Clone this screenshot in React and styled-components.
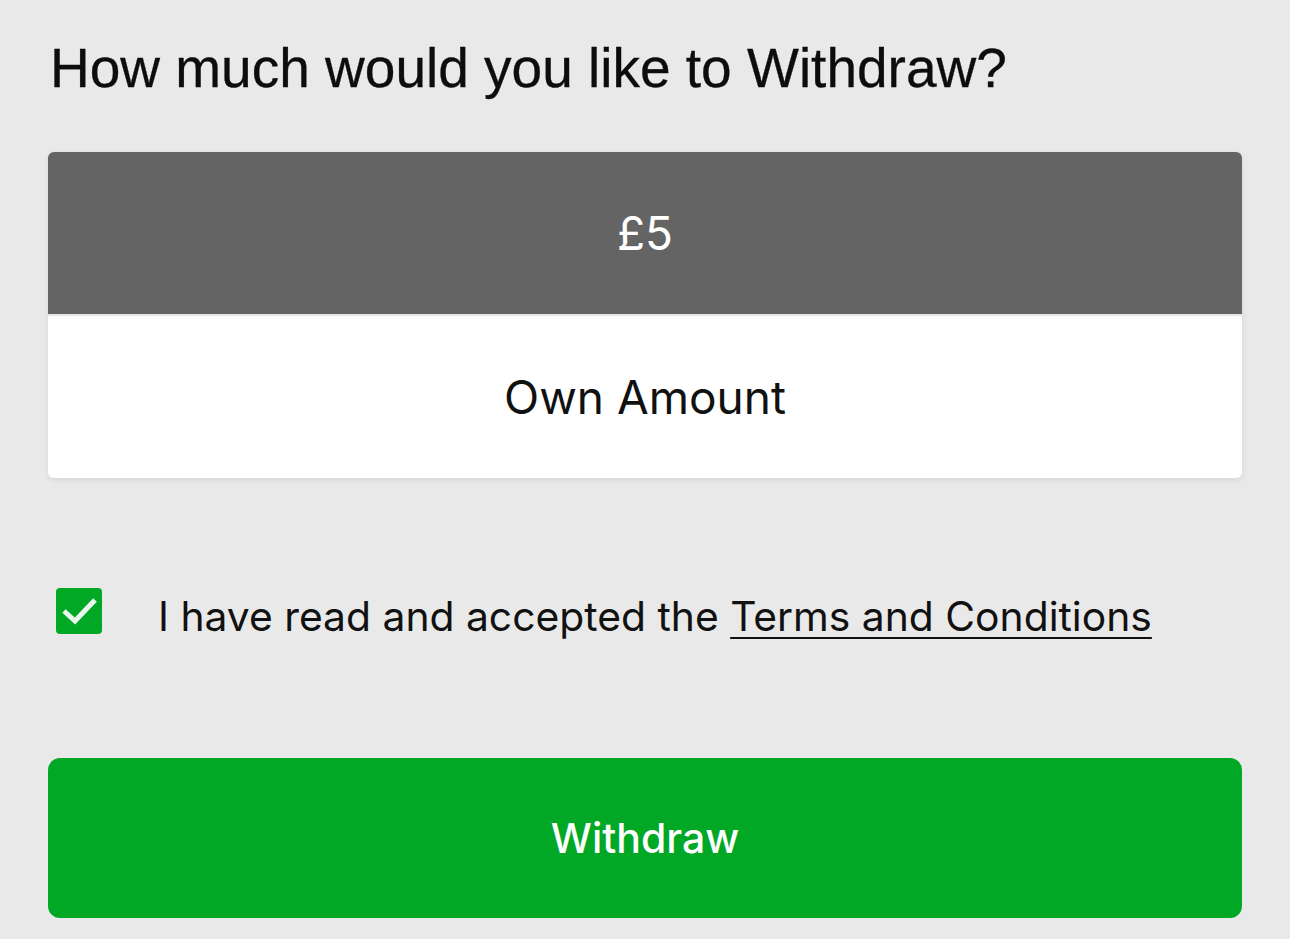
import styled, { createGlobalStyle } from 'styled-components';

const GlobalStyle = createGlobalStyle`
  body {
    margin: 0;
    background: #e9e9e9;
    font-family: Inter, "Noto Sans", sans-serif;
    color: #111111;
  }
`;

const Page = styled.div`
  padding: 34px 48px 20px;
  display: flex;
  flex-direction: column;
`;

const Title = styled.h1`
  margin: 0 0 50px 2px;
  font-family: "Liberation Sans", Arial, sans-serif;
  font-weight: 400;
  font-size: 55px;
  line-height: 68px;
  color: #0d0d0d;
  -webkit-text-stroke: 0.3px #0d0d0d;
`;

const Options = styled.div`
  display: flex;
  flex-direction: column;
  gap: 2px;
  background: #e6e6e6;
  border-radius: 6px;
  overflow: hidden;
  box-shadow: 0 2px 6px rgba(0, 0, 0, 0.08);
`;

const Option = styled.button`
  height: 162px;
  border: 0;
  background: ${(p) => (p.$selected ? '#646464' : '#ffffff')};
  color: ${(p) => (p.$selected ? '#ffffff' : '#111111')};
  font-family: Inter, "Noto Sans", sans-serif;
  font-size: 46px;
  font-weight: 400;
  display: flex;
  align-items: center;
  justify-content: center;
  padding: 0;
  cursor: pointer;
`;

const TermsRow = styled.label`
  margin-top: 108px;
  display: flex;
  align-items: center;
  gap: 56px;
  padding-left: 8px;
`;

const Box = styled.span`
  width: 46px;
  height: 46px;
  border-radius: 4px;
  background: #00a826;
  display: flex;
  flex-shrink: 0;
  margin-top: -10px;
`;

const TermsText = styled.span`
  font-size: 40.8px;
  line-height: 60px;
  color: #111111;

  a {
    color: inherit;
    text-decoration: underline;
    text-underline-offset: 6px;
    text-decoration-thickness: 2px;
  }
`;

const WithdrawButton = styled.button`
  margin-top: 112px;
  height: 160px;
  border: 0;
  border-radius: 12px;
  background: #00a826;
  color: #ffffff;
  font-family: Inter, "Noto Sans", sans-serif;
  font-size: 41px;
  font-weight: 500;
  cursor: pointer;
`;

function Check() {
  return (
    <svg width="46" height="46" viewBox="0 0 46 46" fill="none">
      <path d="M8 23 L19 33 L39 12" stroke="#e9f7ec" strokeWidth="5" strokeLinecap="butt" strokeLinejoin="miter" />
    </svg>
  );
}

export default function App() {
  return (
    <>
      <GlobalStyle />
      <Page>
        <Title>How much would you like to Withdraw?</Title>
        <Options>
          <Option $selected>£5</Option>
          <Option>Own Amount</Option>
        </Options>
        <TermsRow>
          <Box>
            <Check />
          </Box>
          <TermsText>
            I have read and accepted the <a href="#terms">Terms and Conditions</a>
          </TermsText>
        </TermsRow>
        <WithdrawButton>Withdraw</WithdrawButton>
      </Page>
    </>
  );
}
